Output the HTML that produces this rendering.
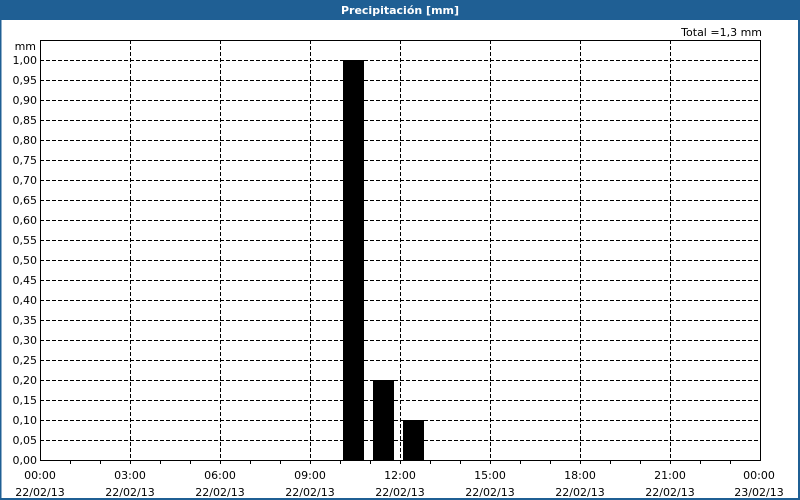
<!DOCTYPE html>
<html><head><style>
html,body{margin:0;padding:0;background:#fff;}
svg{display:block;font-family:"DejaVu Sans","Liberation Sans",sans-serif;font-size:11px;}
</style></head><body>
<svg width="800" height="500" xmlns="http://www.w3.org/2000/svg">
<rect x="0" y="0" width="800" height="500" fill="#fff"/>
<rect x="0" y="0" width="800" height="20" fill="#1f5f94"/>
<rect x="0" y="0" width="1.5" height="500" fill="#1f5f94"/>
<rect x="798" y="0" width="2" height="500" fill="#1f5f94"/>
<rect x="0" y="498" width="800" height="2" fill="#1f5f94"/>
<text x="400" y="14" fill="#fff" font-weight="bold" text-anchor="middle" font-size="11">Precipitación [mm]</text>
<text x="762" y="36" text-anchor="end" fill="#000">Total =1,3 mm</text>
<text x="36" y="50" text-anchor="end" fill="#000">mm</text>
<g stroke="#000" stroke-width="1" stroke-dasharray="4,2" shape-rendering="crispEdges">
<path d="M40 60.5H760M40 80.5H760M40 100.5H760M40 120.5H760M40 140.5H760M40 160.5H760M40 180.5H760M40 200.5H760M40 220.5H760M40 240.5H760M40 260.5H760M40 280.5H760M40 300.5H760M40 320.5H760M40 340.5H760M40 360.5H760M40 380.5H760M40 400.5H760M40 420.5H760M40 440.5H760"/>
<path d="M130.5 40V460M220.5 40V460M310.5 40V460M400.5 40V460M490.5 40V460M580.5 40V460M670.5 40V460"/>
</g>
<g fill="#000">
<rect x="343" y="60" width="21" height="400"/>
<rect x="373" y="380" width="21" height="80"/>
<rect x="403" y="420" width="21" height="40"/>
</g>
<g stroke="#000" fill="none" shape-rendering="crispEdges">
<rect x="40.5" y="40.5" width="720" height="420"/>
<path d="M70.5 460v4M100.5 460v4M130.5 460v4M160.5 460v4M190.5 460v4M220.5 460v4M250.5 460v4M280.5 460v4M310.5 460v4M340.5 460v4M370.5 460v4M400.5 460v4M430.5 460v4M460.5 460v4M490.5 460v4M520.5 460v4M550.5 460v4M580.5 460v4M610.5 460v4M640.5 460v4M670.5 460v4M700.5 460v4M730.5 460v4"/>
</g>
<g text-anchor="end" fill="#000">
<text x="37" y="64">1,00</text><text x="37" y="84">0,95</text><text x="37" y="104">0,90</text><text x="37" y="124">0,85</text><text x="37" y="144">0,80</text><text x="37" y="164">0,75</text><text x="37" y="184">0,70</text><text x="37" y="204">0,65</text><text x="37" y="224">0,60</text><text x="37" y="244">0,55</text><text x="37" y="264">0,50</text><text x="37" y="284">0,45</text><text x="37" y="304">0,40</text><text x="37" y="324">0,35</text><text x="37" y="344">0,30</text><text x="37" y="364">0,25</text><text x="37" y="384">0,20</text><text x="37" y="404">0,15</text><text x="37" y="424">0,10</text><text x="37" y="444">0,05</text><text x="37" y="464">0,00</text>
</g>
<g text-anchor="middle" fill="#000">
<text x="40" y="479">00:00</text><text x="40" y="496">22/02/13</text>
<text x="130" y="479">03:00</text><text x="130" y="496">22/02/13</text>
<text x="220" y="479">06:00</text><text x="220" y="496">22/02/13</text>
<text x="310" y="479">09:00</text><text x="310" y="496">22/02/13</text>
<text x="400" y="479">12:00</text><text x="400" y="496">22/02/13</text>
<text x="490" y="479">15:00</text><text x="490" y="496">22/02/13</text>
<text x="580" y="479">18:00</text><text x="580" y="496">22/02/13</text>
<text x="670" y="479">21:00</text><text x="670" y="496">22/02/13</text>
<text x="759" y="479">00:00</text><text x="759" y="496">23/02/13</text>
</g>
</svg>
</body></html>
